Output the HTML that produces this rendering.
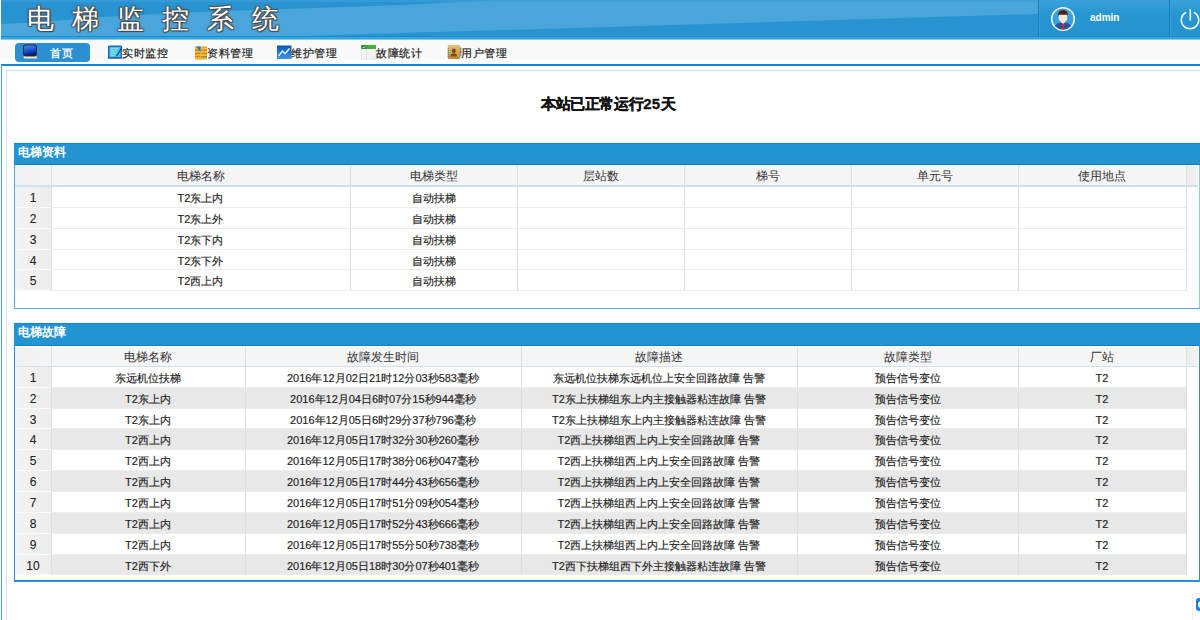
<!DOCTYPE html>
<html><head><meta charset="utf-8"><title>电梯监控系统</title>
<style>
*{margin:0;padding:0;box-sizing:border-box}
html,body{width:1200px;height:620px;overflow:hidden;background:#fff;font-family:"Liberation Sans",sans-serif;color:#222}
.a{position:absolute}
#hdr{position:absolute;left:1px;top:0;width:1199px;height:40px;overflow:hidden}
#title{position:absolute;left:26px;top:1px;font-size:27px;letter-spacing:18px;color:#fff;white-space:nowrap;
 text-shadow:0 0 1px #333,1px 1px 1px #444,-1px -1px 1px #555,1px -1px 1px #555,-1px 1px 1px #555}
.sep{position:absolute;top:0;width:1px;height:37px;background:#1c7db9}
#admin{position:absolute;left:1089px;top:12px;font-size:10px;font-weight:bold;color:#fff}
#nav{position:absolute;left:0;top:40px;width:1200px;height:23px;background:linear-gradient(#f9f9f9 0,#f9f9f9 70%,#fefefe 100%)}
#navline{position:absolute;left:1px;top:64px;width:1199px;height:2px;background:#1a84c8}
.ni{position:absolute;top:46px;font-size:11px;letter-spacing:0.5px;color:#222;-webkit-text-stroke:0.2px #222;white-space:nowrap;line-height:14px}
#home{position:absolute;left:15px;top:43px;width:75px;height:19px;background:#2a90d2;border-radius:4px}
#hometxt{position:absolute;left:50px;top:46px;font-size:11px;letter-spacing:0.5px;color:#fff;line-height:14px;-webkit-text-stroke:0.3px #fff}
#lv1{position:absolute;left:1px;top:65px;width:1px;height:556px;background:#4aa3dc}
#lv2{position:absolute;left:6px;top:70px;width:1px;height:550px;background:#d0e2f4}
#lh2{position:absolute;left:6px;top:70px;width:1194px;height:1px;background:#d0e2f4}
#runtxt{position:absolute;left:541px;top:95px;font-size:15px;letter-spacing:-0.4px;-webkit-text-stroke:0.3px #111;font-weight:bold;color:#111;white-space:nowrap}
.panel{position:absolute;left:14px;width:1186px;border:1px solid #3a9ad9}
.ph{position:absolute;left:14px;width:1186px;height:23px;background:#2394d2;border-top:1px solid #1585c8;border-bottom:1px solid #0f7fc4;color:#fff;font-weight:bold;font-size:12px;line-height:16px;padding-left:4px}
.hc,.dc,.rn,.rf{position:absolute;text-align:center;font-size:11px;white-space:nowrap;overflow:hidden;padding-right:1px}
.hc{background:#f5f5f5;border-left:1px solid #e0e0e0;border-top:1px solid #fff;color:#333;font-size:12px}
.hc.hn{border-left:none;background:linear-gradient(90deg,#f0f0f0,#f5f5f5)}
.hc.hf{background:linear-gradient(90deg,#ececec,#f3f3f3)}
.hline{position:absolute;height:1px;background:#cfe1f2}
.dc{-webkit-text-stroke:0.15px #222;background:#fff;border-left:1px solid #dedede;border-bottom:1px solid #ececec;color:#222}
.dc.alt{background:#e8e8e8}
.rn{background:linear-gradient(90deg,#f4f4f4,#ececec);color:#222;font-size:12px;padding-right:0;-webkit-text-stroke:0.1px #222;border-bottom:1px solid #fafafa}
.rf{background:#fff;border-left:1px solid #dedede}
</style></head>
<body>
<div id="hdr">
 <svg width="1199" height="40" style="position:absolute;left:0;top:0">
  <rect x="0" y="0" width="1199" height="40" fill="#2893d1"/>
  <polygon points="0,24 40,22 100,17 200,12 300,8.5 400,5 480,1 500,0 1037,0 1037,14 270,37 0,37" fill="#4aa6da"/>
  <rect x="0" y="0" width="1199" height="2" fill="#3d9fd8" opacity="0.6"/>
  <rect x="0" y="36" width="1199" height="1" fill="#2289c6"/><rect x="0" y="37" width="1199" height="2" fill="#2aaae4"/><rect x="0" y="39" width="1199" height="1" fill="#86c8ec"/>
  <defs><linearGradient id="rg" x1="0" y1="0" x2="0" y2="1"><stop offset="0" stop-color="#3ca2da"/><stop offset="0.35" stop-color="#2797d2"/><stop offset="1" stop-color="#2394d0"/></linearGradient></defs><rect x="1037" y="0" width="162" height="36" fill="url(#rg)"/>
 </svg>
 <div id="title">电梯监控系统</div>
 <div class="sep" style="left:1037px"></div><div class="sep" style="left:1038px;background:#3aa3dc;opacity:.6"></div>
 <div class="sep" style="left:1168px"></div><div class="sep" style="left:1169px;background:#3aa3dc;opacity:.6"></div>
 <svg width="28" height="28" style="position:absolute;left:1048px;top:5px" viewBox="0 0 28 28">
  <circle cx="14" cy="14" r="11.3" fill="#38a0dc" stroke="#eaf6fc" stroke-width="1.6"/>
  <clipPath id="av"><circle cx="14" cy="14" r="10.5"/></clipPath>
  <g clip-path="url(#av)">
  <path d="M4.5 24 Q6 17.5 14 17 Q22 17.5 23.5 24 L23.5 28 L4.5 28Z" fill="#2a52a2"/>
  <path d="M11.5 16.5 L16.5 16.5 L14 19.5Z" fill="#f4f4f4"/>
  <path d="M13.3 18.3 L14.7 18.3 L15.3 25.5 L14 26.5 L12.7 25.5Z" fill="#e0281e"/>
  <path d="M9.6 8.5 L18.4 8.5 L18.2 14.5 Q16.8 17.3 14 17.6 Q11.2 17.3 9.8 14.5Z" fill="#f8e6d2"/>
  <path d="M9.2 11.5 Q8.6 5 14 5 Q19.4 5 18.8 11.5 L18.2 9.8 Q14 9.6 9.8 9.8Z" fill="#4a2216"/>
  </g>
 </svg>
<div id="admin">admin</div>
 <svg width="24" height="24" style="position:absolute;left:1177px;top:7px" viewBox="0 0 24 24">
  <path d="M8.2 5.2 A8.7 8.7 0 1 0 15.8 5.2" fill="none" stroke="#eef7fc" stroke-width="1.6"/>
  <line x1="12.3" y1="2.3" x2="12.3" y2="13.6" stroke="#eef7fc" stroke-width="1.6"/>
 </svg>
</div>
<div id="nav"></div>
<div id="home"></div>
<svg width="16" height="16" style="position:absolute;left:22px;top:44px" viewBox="0 0 16 16">
 <defs><linearGradient id="scr" x1="0" y1="0" x2="0.3" y2="1"><stop offset="0" stop-color="#3f8ff0"/><stop offset="0.6" stop-color="#1a50c8"/><stop offset="1" stop-color="#061e78"/></linearGradient></defs>
 <path d="M1.5 11.5 L14.5 11.5 L15 14.5 L2 14.5Z" fill="#efe6d2"/>
 <rect x="1" y="0.5" width="14" height="12" rx="2.5" fill="#2a2a3a"/>
 <rect x="2" y="1.5" width="12" height="10" rx="1.8" fill="url(#scr)"/>
</svg>
<div id="hometxt">首页</div>

<svg width="16" height="16" style="position:absolute;left:107px;top:44px" viewBox="0 0 16 16">
 <rect x="0.5" y="12.5" width="15" height="2.5" rx="1" fill="#5a6070" opacity="0.6"/>
 <rect x="1" y="1.5" width="14" height="13" rx="1" fill="#1c6cb4"/>
 <rect x="2.5" y="3" width="11" height="10" fill="#48c4e6"/>
 <path d="M3.5 4.8H11.5M3.5 7H10M3.5 9.2H9M3.5 11.3H8" stroke="#9ae4f6" stroke-width="1"/>
 <path d="M9 12 L14.5 3 L15.3 4 L10 12.6Z" fill="#0e4a80"/>
</svg>
<div class="ni" style="left:122px">实时监控</div>

<svg width="14" height="16" style="position:absolute;left:194px;top:45px" viewBox="0 0 14 16">
 <rect x="1" y="1.5" width="12" height="13" fill="#f2a024"/>
 <path d="M1 5H13M1 8.5H13M1 11.5H13" stroke="#e86a18" stroke-width="1" opacity="0.8"/>
 <path d="M1 3.5H13M1 6.8H13M1 10H13M1 13H13" stroke="#f8d048" stroke-width="0.8"/>
 <path d="M7 1.5V14.5" stroke="#b8d070" stroke-width="1"/>
 <path d="M2 1.5 L6.5 1.5 L6.5 7 Z" fill="#1e78d8"/>
 <path d="M7.5 12H13" stroke="#48a848" stroke-width="1"/>
</svg>
<div class="ni" style="left:207px">资料管理</div>

<svg width="15" height="15" style="position:absolute;left:277px;top:45px" viewBox="0 0 15 15">
 <defs><linearGradient id="chg" x1="0" y1="0" x2="0" y2="1"><stop offset="0" stop-color="#0a56b8"/><stop offset="1" stop-color="#3c96e6"/></linearGradient></defs>
 <rect x="0" y="0.5" width="14.5" height="13.5" fill="url(#chg)"/>
 <path d="M1.5 11 L5.5 6 L8 8.8 L12.5 3.5" stroke="#e6f4ff" stroke-width="1.4" fill="none"/>
</svg>
<div class="ni" style="left:291px">维护管理</div>

<svg width="16" height="16" style="position:absolute;left:361px;top:44px" viewBox="0 0 16 16">
 <rect x="0.5" y="1" width="14.5" height="14" fill="#f6f6f4" stroke="#dedede" stroke-width="0.8"/>
 <rect x="0.5" y="1" width="14.5" height="4" fill="#44b038"/>
 <rect x="0.5" y="1" width="5" height="4" fill="#2a8a30"/>
 <path d="M2 3.2 L3 4 L4.5 2.2" stroke="#c8f0c0" stroke-width="0.9" fill="none"/>
 <path d="M5.5 5V15" stroke="#d8dce8" stroke-width="1"/>
 <path d="M1 9H15M1 12H15" stroke="#ececec" stroke-width="0.8"/>
</svg>
<div class="ni" style="left:376px">故障统计</div>

<svg width="15" height="16" style="position:absolute;left:447px;top:44px" viewBox="0 0 15 16">
 <defs><linearGradient id="bk" x1="0" y1="0" x2="0" y2="1"><stop offset="0" stop-color="#e2c07a"/><stop offset="1" stop-color="#c08a38"/></linearGradient></defs>
 <rect x="0.8" y="1" width="12.4" height="14" rx="1" fill="url(#bk)"/>
 <path d="M1.2 4V13" stroke="#50607a" stroke-width="1" stroke-dasharray="1 1"/>
 <rect x="13" y="3.5" width="1.4" height="2.6" fill="#30b030"/>
 <rect x="13" y="6.6" width="1.4" height="2.6" fill="#e02828"/>
 <rect x="13" y="9.6" width="1.4" height="2.6" fill="#30a0e8"/>
 <ellipse cx="6.8" cy="6.8" rx="2" ry="2.3" fill="#7a4e1c"/>
 <path d="M3.5 12.5 Q4 9.3 6.8 9.3 Q9.6 9.3 10.1 12.5Z" fill="#7a4e1c"/>
</svg>
<div class="ni" style="left:461px">用户管理</div>

<div id="navline"></div>
<div id="lv1"></div>
<div id="lv2"></div>
<div id="lh2"></div>

<div id="runtxt">本站已正常运行<span style="letter-spacing:0.3px">25</span>天</div>

<div class="panel" style="top:143px;height:166px;border-color:#56a8e0;border-right-color:#8cc8ee"></div>
<div class="ph" style="top:143px;height:22px">电梯资料</div>
<div class="hc hn" style="left:15px;top:165px;width:36px;height:20px;line-height:20px"></div>
<div class="hc" style="left:51px;top:165px;width:299px;height:20px;line-height:20px">电梯名称</div>
<div class="hc" style="left:350px;top:165px;width:167px;height:20px;line-height:20px">电梯类型</div>
<div class="hc" style="left:517px;top:165px;width:167px;height:20px;line-height:20px">层站数</div>
<div class="hc" style="left:684px;top:165px;width:167px;height:20px;line-height:20px">梯号</div>
<div class="hc" style="left:851px;top:165px;width:167px;height:20px;line-height:20px">单元号</div>
<div class="hc" style="left:1018px;top:165px;width:168px;height:20px;line-height:20px">使用地点</div>
<div class="hc hf" style="left:1186px;top:165px;width:12px;height:20px;line-height:20px"></div>
<div class="hline" style="left:15px;top:185px;height:2px;width:1183px"></div>
<div class="rn" style="left:15px;top:187px;width:36px;height:21px;line-height:23px">1</div>
<div class="dc" style="left:51px;top:187px;width:299px;height:21px;line-height:23px">T2东上内</div>
<div class="dc" style="left:350px;top:187px;width:167px;height:21px;line-height:23px">自动扶梯</div>
<div class="dc" style="left:517px;top:187px;width:167px;height:21px;line-height:23px"></div>
<div class="dc" style="left:684px;top:187px;width:167px;height:21px;line-height:23px"></div>
<div class="dc" style="left:851px;top:187px;width:167px;height:21px;line-height:23px"></div>
<div class="dc" style="left:1018px;top:187px;width:168px;height:21px;line-height:23px"></div>
<div class="rf" style="left:1186px;top:187px;width:12px;height:21px;line-height:23px"></div>
<div class="rn" style="left:15px;top:208px;width:36px;height:21px;line-height:23px">2</div>
<div class="dc" style="left:51px;top:208px;width:299px;height:21px;line-height:23px">T2东上外</div>
<div class="dc" style="left:350px;top:208px;width:167px;height:21px;line-height:23px">自动扶梯</div>
<div class="dc" style="left:517px;top:208px;width:167px;height:21px;line-height:23px"></div>
<div class="dc" style="left:684px;top:208px;width:167px;height:21px;line-height:23px"></div>
<div class="dc" style="left:851px;top:208px;width:167px;height:21px;line-height:23px"></div>
<div class="dc" style="left:1018px;top:208px;width:168px;height:21px;line-height:23px"></div>
<div class="rf" style="left:1186px;top:208px;width:12px;height:21px;line-height:23px"></div>
<div class="rn" style="left:15px;top:229px;width:36px;height:21px;line-height:23px">3</div>
<div class="dc" style="left:51px;top:229px;width:299px;height:21px;line-height:23px">T2东下内</div>
<div class="dc" style="left:350px;top:229px;width:167px;height:21px;line-height:23px">自动扶梯</div>
<div class="dc" style="left:517px;top:229px;width:167px;height:21px;line-height:23px"></div>
<div class="dc" style="left:684px;top:229px;width:167px;height:21px;line-height:23px"></div>
<div class="dc" style="left:851px;top:229px;width:167px;height:21px;line-height:23px"></div>
<div class="dc" style="left:1018px;top:229px;width:168px;height:21px;line-height:23px"></div>
<div class="rf" style="left:1186px;top:229px;width:12px;height:21px;line-height:23px"></div>
<div class="rn" style="left:15px;top:250px;width:36px;height:20px;line-height:22px">4</div>
<div class="dc" style="left:51px;top:250px;width:299px;height:20px;line-height:22px">T2东下外</div>
<div class="dc" style="left:350px;top:250px;width:167px;height:20px;line-height:22px">自动扶梯</div>
<div class="dc" style="left:517px;top:250px;width:167px;height:20px;line-height:22px"></div>
<div class="dc" style="left:684px;top:250px;width:167px;height:20px;line-height:22px"></div>
<div class="dc" style="left:851px;top:250px;width:167px;height:20px;line-height:22px"></div>
<div class="dc" style="left:1018px;top:250px;width:168px;height:20px;line-height:22px"></div>
<div class="rf" style="left:1186px;top:250px;width:12px;height:20px;line-height:22px"></div>
<div class="rn" style="left:15px;top:270px;width:36px;height:21px;line-height:23px">5</div>
<div class="dc" style="left:51px;top:270px;width:299px;height:21px;line-height:23px">T2西上内</div>
<div class="dc" style="left:350px;top:270px;width:167px;height:21px;line-height:23px">自动扶梯</div>
<div class="dc" style="left:517px;top:270px;width:167px;height:21px;line-height:23px"></div>
<div class="dc" style="left:684px;top:270px;width:167px;height:21px;line-height:23px"></div>
<div class="dc" style="left:851px;top:270px;width:167px;height:21px;line-height:23px"></div>
<div class="dc" style="left:1018px;top:270px;width:168px;height:21px;line-height:23px"></div>
<div class="rf" style="left:1186px;top:270px;width:12px;height:21px;line-height:23px"></div>

<div class="panel" style="top:323px;height:259px;border-color:#2890d4;border-bottom-width:2px"></div>
<div class="ph" style="top:323px">电梯故障</div>
<div class="hc hn" style="left:15px;top:346px;width:36px;height:20px;line-height:20px"></div>
<div class="hc" style="left:51px;top:346px;width:194px;height:20px;line-height:20px">电梯名称</div>
<div class="hc" style="left:245px;top:346px;width:276px;height:20px;line-height:20px">故障发生时间</div>
<div class="hc" style="left:521px;top:346px;width:276px;height:20px;line-height:20px">故障描述</div>
<div class="hc" style="left:797px;top:346px;width:221px;height:20px;line-height:20px">故障类型</div>
<div class="hc" style="left:1018px;top:346px;width:168px;height:20px;line-height:20px">厂站</div>
<div class="hc hf" style="left:1186px;top:346px;width:12px;height:20px;line-height:20px"></div>
<div class="hline" style="left:15px;top:366px;height:1px;width:1183px"></div>
<div class="rn" style="left:15px;top:367px;width:36px;height:21px;line-height:23px">1</div>
<div class="dc" style="left:51px;top:367px;width:194px;height:21px;line-height:23px">东远机位扶梯</div>
<div class="dc" style="left:245px;top:367px;width:276px;height:21px;line-height:23px">2016年12月02日21时12分03秒583毫秒</div>
<div class="dc" style="left:521px;top:367px;width:276px;height:21px;line-height:23px">东远机位扶梯东远机位上安全回路故障 告警</div>
<div class="dc" style="left:797px;top:367px;width:221px;height:21px;line-height:23px">预告信号变位</div>
<div class="dc" style="left:1018px;top:367px;width:168px;height:21px;line-height:23px">T2</div>
<div class="rf" style="left:1186px;top:367px;width:12px;height:21px;line-height:23px"></div>
<div class="rn" style="left:15px;top:388px;width:36px;height:21px;line-height:23px">2</div>
<div class="dc alt" style="left:51px;top:388px;width:194px;height:21px;line-height:23px">T2东上内</div>
<div class="dc alt" style="left:245px;top:388px;width:276px;height:21px;line-height:23px">2016年12月04日6时07分15秒944毫秒</div>
<div class="dc alt" style="left:521px;top:388px;width:276px;height:21px;line-height:23px">T2东上扶梯组东上内主接触器粘连故障 告警</div>
<div class="dc alt" style="left:797px;top:388px;width:221px;height:21px;line-height:23px">预告信号变位</div>
<div class="dc alt" style="left:1018px;top:388px;width:168px;height:21px;line-height:23px">T2</div>
<div class="rf" style="left:1186px;top:388px;width:12px;height:21px;line-height:23px"></div>
<div class="rn" style="left:15px;top:409px;width:36px;height:20px;line-height:22px">3</div>
<div class="dc" style="left:51px;top:409px;width:194px;height:20px;line-height:22px">T2东上内</div>
<div class="dc" style="left:245px;top:409px;width:276px;height:20px;line-height:22px">2016年12月05日6时29分37秒796毫秒</div>
<div class="dc" style="left:521px;top:409px;width:276px;height:20px;line-height:22px">T2东上扶梯组东上内主接触器粘连故障 告警</div>
<div class="dc" style="left:797px;top:409px;width:221px;height:20px;line-height:22px">预告信号变位</div>
<div class="dc" style="left:1018px;top:409px;width:168px;height:20px;line-height:22px">T2</div>
<div class="rf" style="left:1186px;top:409px;width:12px;height:20px;line-height:22px"></div>
<div class="rn" style="left:15px;top:429px;width:36px;height:21px;line-height:23px">4</div>
<div class="dc alt" style="left:51px;top:429px;width:194px;height:21px;line-height:23px">T2西上内</div>
<div class="dc alt" style="left:245px;top:429px;width:276px;height:21px;line-height:23px">2016年12月05日17时32分30秒260毫秒</div>
<div class="dc alt" style="left:521px;top:429px;width:276px;height:21px;line-height:23px">T2西上扶梯组西上内上安全回路故障 告警</div>
<div class="dc alt" style="left:797px;top:429px;width:221px;height:21px;line-height:23px">预告信号变位</div>
<div class="dc alt" style="left:1018px;top:429px;width:168px;height:21px;line-height:23px">T2</div>
<div class="rf" style="left:1186px;top:429px;width:12px;height:21px;line-height:23px"></div>
<div class="rn" style="left:15px;top:450px;width:36px;height:21px;line-height:23px">5</div>
<div class="dc" style="left:51px;top:450px;width:194px;height:21px;line-height:23px">T2西上内</div>
<div class="dc" style="left:245px;top:450px;width:276px;height:21px;line-height:23px">2016年12月05日17时38分06秒047毫秒</div>
<div class="dc" style="left:521px;top:450px;width:276px;height:21px;line-height:23px">T2西上扶梯组西上内上安全回路故障 告警</div>
<div class="dc" style="left:797px;top:450px;width:221px;height:21px;line-height:23px">预告信号变位</div>
<div class="dc" style="left:1018px;top:450px;width:168px;height:21px;line-height:23px">T2</div>
<div class="rf" style="left:1186px;top:450px;width:12px;height:21px;line-height:23px"></div>
<div class="rn" style="left:15px;top:471px;width:36px;height:21px;line-height:23px">6</div>
<div class="dc alt" style="left:51px;top:471px;width:194px;height:21px;line-height:23px">T2西上内</div>
<div class="dc alt" style="left:245px;top:471px;width:276px;height:21px;line-height:23px">2016年12月05日17时44分43秒656毫秒</div>
<div class="dc alt" style="left:521px;top:471px;width:276px;height:21px;line-height:23px">T2西上扶梯组西上内上安全回路故障 告警</div>
<div class="dc alt" style="left:797px;top:471px;width:221px;height:21px;line-height:23px">预告信号变位</div>
<div class="dc alt" style="left:1018px;top:471px;width:168px;height:21px;line-height:23px">T2</div>
<div class="rf" style="left:1186px;top:471px;width:12px;height:21px;line-height:23px"></div>
<div class="rn" style="left:15px;top:492px;width:36px;height:21px;line-height:23px">7</div>
<div class="dc" style="left:51px;top:492px;width:194px;height:21px;line-height:23px">T2西上内</div>
<div class="dc" style="left:245px;top:492px;width:276px;height:21px;line-height:23px">2016年12月05日17时51分09秒054毫秒</div>
<div class="dc" style="left:521px;top:492px;width:276px;height:21px;line-height:23px">T2西上扶梯组西上内上安全回路故障 告警</div>
<div class="dc" style="left:797px;top:492px;width:221px;height:21px;line-height:23px">预告信号变位</div>
<div class="dc" style="left:1018px;top:492px;width:168px;height:21px;line-height:23px">T2</div>
<div class="rf" style="left:1186px;top:492px;width:12px;height:21px;line-height:23px"></div>
<div class="rn" style="left:15px;top:513px;width:36px;height:21px;line-height:23px">8</div>
<div class="dc alt" style="left:51px;top:513px;width:194px;height:21px;line-height:23px">T2西上内</div>
<div class="dc alt" style="left:245px;top:513px;width:276px;height:21px;line-height:23px">2016年12月05日17时52分43秒666毫秒</div>
<div class="dc alt" style="left:521px;top:513px;width:276px;height:21px;line-height:23px">T2西上扶梯组西上内上安全回路故障 告警</div>
<div class="dc alt" style="left:797px;top:513px;width:221px;height:21px;line-height:23px">预告信号变位</div>
<div class="dc alt" style="left:1018px;top:513px;width:168px;height:21px;line-height:23px">T2</div>
<div class="rf" style="left:1186px;top:513px;width:12px;height:21px;line-height:23px"></div>
<div class="rn" style="left:15px;top:534px;width:36px;height:21px;line-height:23px">9</div>
<div class="dc" style="left:51px;top:534px;width:194px;height:21px;line-height:23px">T2西上内</div>
<div class="dc" style="left:245px;top:534px;width:276px;height:21px;line-height:23px">2016年12月05日17时55分50秒738毫秒</div>
<div class="dc" style="left:521px;top:534px;width:276px;height:21px;line-height:23px">T2西上扶梯组西上内上安全回路故障 告警</div>
<div class="dc" style="left:797px;top:534px;width:221px;height:21px;line-height:23px">预告信号变位</div>
<div class="dc" style="left:1018px;top:534px;width:168px;height:21px;line-height:23px">T2</div>
<div class="rf" style="left:1186px;top:534px;width:12px;height:21px;line-height:23px"></div>
<div class="rn" style="left:15px;top:555px;width:36px;height:20px;line-height:22px">10</div>
<div class="dc alt" style="left:51px;top:555px;width:194px;height:20px;line-height:22px">T2西下外</div>
<div class="dc alt" style="left:245px;top:555px;width:276px;height:20px;line-height:22px">2016年12月05日18时30分07秒401毫秒</div>
<div class="dc alt" style="left:521px;top:555px;width:276px;height:20px;line-height:22px">T2西下扶梯组西下外主接触器粘连故障 告警</div>
<div class="dc alt" style="left:797px;top:555px;width:221px;height:20px;line-height:22px">预告信号变位</div>
<div class="dc alt" style="left:1018px;top:555px;width:168px;height:20px;line-height:22px">T2</div>
<div class="rf" style="left:1186px;top:555px;width:12px;height:20px;line-height:22px"></div>

<div class="a" style="left:1192px;top:593px;width:8px;height:27px;border:1px solid #efefef;border-right:none;border-bottom:none;background:#fff"></div>
<div class="a" style="left:1196px;top:598px;width:6px;height:13px;border-radius:3px;background:#1a7ee0"></div>
<div class="a" style="left:1198px;top:601px;width:6px;height:7px;border-radius:50%;background:#e8f2fc"></div>
</body></html>
